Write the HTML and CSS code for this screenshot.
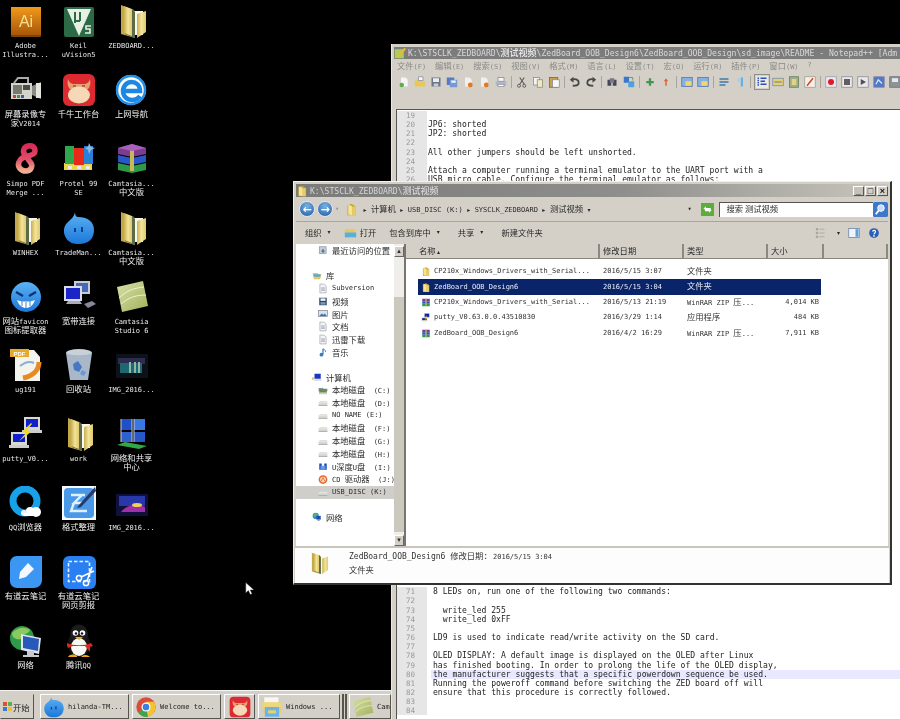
FILE: index.html
```html
<!DOCTYPE html>
<html lang="zh">
<head>
<meta charset="utf-8">
<title>Desktop</title>
<link rel="stylesheet" href="styles.css">
</head>
<body>
<svg class="defs" xmlns="http://www.w3.org/2000/svg">
  <defs>
    <linearGradient id="gOrange" x1="0" y1="0" x2="0" y2="1"><stop offset="0" stop-color="#f09a1c"/><stop offset="1" stop-color="#a8560a"/></linearGradient>
    <linearGradient id="gFolder" x1="0" y1="0" x2="1" y2="0"><stop offset="0" stop-color="#c9b04e"/><stop offset=".5" stop-color="#f2e49c"/><stop offset="1" stop-color="#e0c86c"/></linearGradient>
    <linearGradient id="gBlue" x1="0" y1="0" x2="0" y2="1"><stop offset="0" stop-color="#5cb2f4"/><stop offset="1" stop-color="#1c78d8"/></linearGradient>
    <linearGradient id="gOlive" x1="0" y1="0" x2="1" y2="1"><stop offset="0" stop-color="#d8dfa8"/><stop offset="1" stop-color="#a2b25c"/></linearGradient>
    <linearGradient id="g8" x1="0" y1="0" x2="0" y2="1"><stop offset="0" stop-color="#d82c58"/><stop offset=".55" stop-color="#e0506a"/><stop offset="1" stop-color="#f0b090"/></linearGradient>
  </defs>
  <symbol id="i-ai" viewBox="0 0 34 34"><rect x="2" y="5" width="30" height="28" rx="1" fill="#7c4408"/><rect x="2" y="3" width="30" height="28" fill="url(#gOrange)"/></symbol>
  <symbol id="i-keil" viewBox="0 0 34 34"><rect x="2" y="3" width="30" height="30" rx="2" fill="#2c6a46"/><path d="M5 5H29L17 32Z" fill="#e8f0e4"/><path d="M13 8v11M13 17h5M18 8v9" stroke="#2c6a46" stroke-width="2" fill="none"/><path d="M22 20h8v11h-8z" fill="#2c6a46"/><path d="M29 22h-5v3h4v4h-5" stroke="#e8f0e4" stroke-width="1.6" fill="none"/></symbol>
  <symbol id="i-folder" viewBox="0 0 34 34"><path d="M6 1l14 6v27L6 30Z" fill="#c4a94a"/><path d="M12 7h16v24H12z" fill="#f8f8f0"/><path d="M10 5h8l2 3v26l-10-4Z" fill="#5c6a48"/><path d="M22 10l9-3v21l-9 6Z" fill="url(#gFolder)"/><path d="M9 2l8 3v27l-8-3Z" fill="url(#gFolder)"/></symbol>
  <symbol id="i-cam" viewBox="0 0 34 34"><rect x="2" y="10" width="21" height="16" fill="#d4d4cc"/><rect x="4" y="12" width="9" height="9" fill="#75786c"/><path d="M4 22h3v3H4z" fill="#d83838"/><path d="M8 22h3v3H8z" fill="#3c9a44"/><path d="M12 22h3v3h-3z" fill="#3c58c8"/><path d="M23 13l9-4v17l-9-4Z" fill="#8a8a84"/><rect x="27" y="10" width="5" height="15" fill="#e4e4dc"/><path d="M5 10l4-5h10v5" fill="none" stroke="#aaa" stroke-width="2"/><rect x="14" y="12" width="7" height="5" fill="#4a4a48"/></symbol>
  <symbol id="i-cow" viewBox="0 0 34 34"><rect x="1" y="1" width="32" height="32" rx="6" fill="#dc2a30"/><path d="M6 6c1 3 2 4 5 5h12c3-1 4-2 5-5 1 5 0 8-2 10H8C6 14 5 11 6 6Z" fill="#e8a070"/><ellipse cx="17" cy="22" rx="11" ry="8.5" fill="#f6d8b8"/><path d="M11 13h3M20 13h3" stroke="#703018" stroke-width="1"/></symbol>
  <symbol id="i-ie" viewBox="0 0 34 34"><circle cx="16" cy="17" r="15" fill="#fff"/><circle cx="16" cy="17" r="14" fill="none" stroke="#2090e8" stroke-width="2.5"/><path d="M7 18h18c0-6-4-9-8.500-9S8 13 8 18s4 9 9 9c3 0 6-1 8-4" fill="none" stroke="#1a88e4" stroke-width="4.5"/></symbol>
  <symbol id="i-simpo" viewBox="0 0 34 34"><path d="M26 9c0-4-3-6-7-5-4 1-6 5-3 9l6 8c2 3 0 8-5 8s-9-4-7-9c1-3 4-5 9-6 4-1 7-2 7-5Z" fill="none" stroke="url(#g8)" stroke-width="5.5"/></symbol>
  <symbol id="i-protel" viewBox="0 0 34 34"><path d="M2 28h28v-7H2z" fill="#e8d848"/><path d="M3 4h9v18H3z" fill="#2da84c"/><path d="M12 6h10v17H12z" fill="#e82818"/><path d="M22 4h9v18h-9z" fill="#2880d8"/><path d="M6 24h4v3H6zM15 24h4v3h-4zM24 24h4v3h-4z" fill="#e8e8f0"/><path d="M27 1l2 4 4 1-4 2-2 4-1-4-3-2 3-1Z" fill="#8ab8e0"/></symbol>
  <symbol id="i-rar" viewBox="0 0 34 34"><path d="M3 6l14-4 14 4v6l-14 3-14-3Z" fill="#7c3c90"/><path d="M3 13l14 3 14-3v7l-14 3-14-3Z" fill="#2858c8"/><path d="M3 21l14 3 14-3v7l-14 3-14-3Z" fill="#2c9848"/><path d="M15 5h4v24h-4z" fill="#c8b858"/><path d="M3 6l14-4 14 4-14 3Z" fill="#a860b8"/></symbol>
  <symbol id="i-drop" viewBox="0 0 34 34"><path d="M13 1c-1 5-3 6-7 10C1 15 1 22 4 27c3 5 8 6 13 6 9 0 15-5 15-14S25 6 16 6c-2 0-3-2-3-5Z" fill="url(#gBlue)"/><path d="M13 17v4M20 16v5" stroke="#0c4090" stroke-width="2"/></symbol>
  <symbol id="i-face" viewBox="0 0 34 34"><circle cx="17" cy="17" r="15" fill="url(#gBlue)"/><path d="M7 12l7 4M27 12l-7 4" stroke="#0c3478" stroke-width="2.5"/><path d="M8 20c5 2 13 2 18 0-2 6-6 8-9 8s-7-2-9-8Z" fill="#fff"/><path d="M13 21v5M17 22v6M21 21v5" stroke="#4a80c8"/></symbol>
  <symbol id="i-net" viewBox="0 0 34 34"><rect x="12" y="1" width="16" height="13" fill="#c4ccd8"/><rect x="14" y="3" width="12" height="9" fill="#4868b8"/><rect x="2" y="6" width="18" height="15" fill="#d8dce4"/><rect x="4" y="8" width="14" height="11" fill="#1c24c8"/><path d="M6 21h12l2 3H4Z" fill="#aab"/><path d="M22 24l8-3 4 3-8 4Z" fill="#889"/></symbol>
  <symbol id="i-olive" viewBox="0 0 34 34"><path d="M2 7l26-6 5 25-26 6Z" fill="url(#gOlive)"/><path d="M4 18c8-8 16-10 25-11M6 24c8-7 16-9 25-9" stroke="#eef2d0" fill="none"/></symbol>
  <symbol id="i-pdf" viewBox="0 0 34 34"><path d="M6 2h19l6 7v24H6Z" fill="#f4f4ee"/><path d="M1 1h19v8H1z" fill="#e8a828"/><path d="M30 14c0 8-6 14-16 16" fill="none" stroke="#e88a20" stroke-width="5"/><path d="M11 18c5-4 10-5 14-3" fill="none" stroke="#88b0d8" stroke-width="2"/></symbol>
  <symbol id="i-bin" viewBox="0 0 34 34"><ellipse cx="17" cy="5" rx="13" ry="4" fill="#c8d0d8"/><path d="M4 5l4 27h18l4-27c-4 3-22 3-26 0Z" fill="#a8b8c8"/><path d="M11 16l5-3 4 6-3 5-5-2Z" fill="#4878c0"/><path d="M20 22l4 2-2 4-4-2Z" fill="#6898d8"/></symbol>
  <symbol id="i-imgd" viewBox="0 0 34 34"><rect x="1" y="6" width="32" height="24" fill="#0c1218"/><rect x="3" y="10" width="27" height="6" fill="#2c2c50"/><rect x="5" y="15" width="22" height="10" fill="#206870"/><path d="M14 14h2v11h-2zM19 14h2v11h-2zM23 14h2v11h-2z" fill="#90b8a8"/></symbol>
  <symbol id="i-img2" viewBox="0 0 34 34"><rect x="1" y="8" width="32" height="22" fill="#10103c"/><rect x="4" y="10" width="26" height="10" fill="#2838a8"/><path d="M6 26c5-7 16-9 24-5v5Z" fill="#a030a8"/><ellipse cx="22" cy="19" rx="5" ry="2" fill="#f0d060"/></symbol>
  <symbol id="i-putty" viewBox="0 0 34 34"><rect x="15" y="0" width="16" height="13" fill="#d8d8d0"/><rect x="17" y="2" width="12" height="8" fill="#1020c8"/><path d="M13 13h20v3H13z" fill="#ccc"/><rect x="2" y="15" width="16" height="13" fill="#d8d8d0"/><rect x="4" y="17" width="12" height="8" fill="#1020c8"/><path d="M0 28h20v3H0z" fill="#ccc"/><path d="M22 6l-9 9 4 1-7 8 12-9-4-2 5-6Z" fill="#f0d820"/></symbol>
  <symbol id="i-share" viewBox="0 0 34 34"><path d="M6 2h11v11H6z" fill="#2050c8"/><path d="M19 2h11v11H19z" fill="#3878e0"/><path d="M6 15h11v10H6z" fill="#3060d0"/><path d="M19 15h11v10H19z" fill="#2858c8"/><path d="M2 28l8-3 22 4-8 3Z" fill="#30a848"/><path d="M6 2v23M17 2v23M19 2v23" stroke="#ccd" fill="none"/></symbol>
  <symbol id="i-qqb" viewBox="0 0 34 34"><circle cx="16" cy="15" r="12" fill="none" stroke="#18a0e8" stroke-width="7"/><circle cx="21" cy="25" r="4" fill="#fff"/><circle cx="27" cy="26" r="5" fill="#fff"/><circle cx="15" cy="27" r="3" fill="#e8f0f8"/><path d="M15 27h15v3H15z" fill="#fff"/></symbol>
  <symbol id="i-fmt" viewBox="0 0 34 34"><rect x="0" y="0" width="34" height="34" fill="#f4f8ff"/><rect x="2" y="2" width="30" height="30" rx="4" fill="#4a98e8"/><path d="M9 9h14M20 9l-8 8h8M12 17l-3 8h16" fill="none" stroke="#dff0ff" stroke-width="2.4"/><path d="M33 1L17 19l-2 3 4-1L34 5Z" fill="#283868"/></symbol>
  <symbol id="i-yd" viewBox="0 0 34 34"><path d="M8 1h25v24c0 4-3 8-8 8H8c-4 0-7-3-7-7V8c0-4 3-7 7-7Z" fill="#3c96f4"/><path d="M10 24l1-7 8-9 6 6-8 8Z" fill="#f4f8ff"/></symbol>
  <symbol id="i-ydc" viewBox="0 0 34 34"><rect x="1" y="1" width="33" height="33" rx="6" fill="#2a80f0"/><rect x="6.5" y="6.5" width="21" height="20" fill="none" stroke="#e8f2ff" stroke-width="1.6" stroke-dasharray="3.5 2"/><circle cx="17" cy="23" r="2.6" fill="none" stroke="#fff" stroke-width="1.5"/><circle cx="24" cy="28" r="2.6" fill="none" stroke="#fff" stroke-width="1.5"/><path d="M19 22L32 16M25 26L30 12" stroke="#fff" stroke-width="1.6"/></symbol>
  <symbol id="i-netg" viewBox="0 0 34 34"><circle cx="13" cy="14" r="12" fill="#2f9a4c"/><path d="M3 9c5-5 12-7 18-3-2 5-8 3-9 9-5 1-9-1-9-6Z" fill="#8ac860"/><path d="M12 10l20 4-2 16-18-4Z" fill="#dfe4f0"/><path d="M14 12l16 3-1 12-15-3Z" fill="#2858b8"/><path d="M18 27h7v4h5v2H14v-2h4Z" fill="#c8c8d0"/></symbol>
  <symbol id="i-qq" viewBox="0 0 34 34"><ellipse cx="17" cy="20" rx="11" ry="13" fill="#141414"/><ellipse cx="17" cy="10" rx="9" ry="9.5" fill="#1c1c1c"/><ellipse cx="17" cy="23" rx="8" ry="9" fill="#f8f8f4"/><circle cx="13.5" cy="9" r="2.8" fill="#fff"/><circle cx="20.5" cy="9" r="2.8" fill="#fff"/><circle cx="14" cy="9.5" r="1.2" fill="#111"/><circle cx="20" cy="9.5" r="1.2" fill="#111"/><path d="M13 13h8l-4 3Z" fill="#f0b020"/><path d="M5 19c6 3 18 3 24 0l2 3-3 1v5l-5-6H11l-5 2-1-2Z" fill="#d82820"/><path d="M6 33c2-3 6-3 9-1v1ZM19 33c3-3 7-2 9 0Z" fill="#f0a818"/></symbol>
  <symbol id="i-chrome" viewBox="0 0 34 34"><circle cx="17" cy="17" r="15" fill="#dd4b3c"/><path d="M17 17L5 25a15 15 0 0 0 15 7Z" fill="#3aa64a"/><path d="M17 17l3 15a15 15 0 0 0 9-23H17Z" fill="#f4c430"/><circle cx="17" cy="17" r="7" fill="#fff"/><circle cx="17" cy="17" r="5.2" fill="#3a80e0"/></symbol>
  <symbol id="i-tfolder" viewBox="0 0 34 34"><path d="M3 4h14l3 4h11v20H3Z" fill="#e8d070"/><path d="M5 2h22v8H5z" fill="#f8f8f0"/><path d="M2 10h30v7H2z" fill="#ecd87a"/><path d="M6 17h22v15H6z" fill="#6ab4e8"/><path d="M11 22h12v5H11z" fill="#e8d070"/></symbol>
  <symbol id="i-sfolder" viewBox="0 0 16 16"><path d="M3 3l5-2 5 3v11H3Z" fill="#c8a838"/><path d="M4 2l5 2v11l-5-1Z" fill="#f4e498"/><path d="M9 5l4-1v11l-4 0Z" fill="#e8cc68"/></symbol>
  <symbol id="i-szip" viewBox="0 0 16 16"><path d="M2 2h12v4H2z" fill="#7c3c90"/><path d="M2 6h12v4H2z" fill="#2858c8"/><path d="M2 10h12v4H2z" fill="#2c9848"/><path d="M7 2h2v12H7z" fill="#c8b858"/></symbol>
  <symbol id="i-sputty" viewBox="0 0 16 16"><rect x="5" y="1" width="9" height="8" fill="#ccc"/><rect x="6" y="2" width="7" height="5" fill="#1020a8"/><rect x="1" y="8" width="9" height="6" fill="#ccc"/><rect x="2" y="9" width="7" height="3" fill="#1020a8"/><path d="M10 4l-5 5h3l-3 4 6-5H8Z" fill="#f0d820"/></symbol>
  <symbol id="i-drive" viewBox="0 0 16 16"><path d="M1 8l2-2h11l1 2v5H1Z" fill="#d4d4d0"/><path d="M1 8h14v1H1z" fill="#f4f4f0"/><path d="M1 12h14v1H1z" fill="#999"/></symbol>
  <symbol id="i-cdrive" viewBox="0 0 16 16"><path d="M1 4h4l2 1h8v4H1Z" fill="#888"/><rect x="2" y="6" width="12" height="7" fill="#6a8a50"/><path d="M2 11h12v3H2z" fill="#ccc"/><path d="M6 3l3 2-2 2Z" fill="#4a8ac8"/></symbol>
  <symbol id="i-usb" viewBox="0 0 16 16"><path d="M2 3h4v4h4V3h4v10H2Z" fill="#2050b8"/><rect x="4" y="7" width="8" height="6" fill="#6898e0"/></symbol>
  <symbol id="i-cd" viewBox="0 0 16 16"><circle cx="8" cy="8" r="7" fill="#e8682c"/><circle cx="8" cy="8" r="4.5" fill="#f8e0c8"/><path d="M5 11l3-6 3 6" fill="none" stroke="#e8682c" stroke-width="1.4"/></symbol>
  <symbol id="i-lib" viewBox="0 0 16 16"><path d="M1 4h8l2 2h4l-2 8H3Z" fill="#e8c858"/><path d="M2 6h12l-1 4H3Z" fill="#58a8d8"/></symbol>
  <symbol id="i-pc" viewBox="0 0 16 16"><rect x="4" y="2" width="10" height="8" fill="#1838c0"/><path d="M3 11h12v2H3z" fill="#ccd"/><path d="M0 8l3-1v4l-3 1Z" fill="#e8c858"/></symbol>
  <symbol id="i-globe" viewBox="0 0 16 16"><circle cx="6" cy="7" r="5" fill="#3890c8"/><path d="M2 5c3-2 5-2 7-1l-2 3-3 1Z" fill="#5cb85c"/><rect x="7" y="7" width="7" height="6" fill="#1c50b0"/><path d="M9 13h3v2H9z" fill="#888"/></symbol>
  <symbol id="i-doc" viewBox="0 0 16 16"><path d="M3 1h7l3 3v11H3Z" fill="#f4f4f4" stroke="#99a"/><path d="M5 7h6M5 9h6M5 11h6" stroke="#8090a8"/></symbol>
  <symbol id="i-video" viewBox="0 0 16 16"><rect x="2" y="2" width="12" height="12" fill="#2c4868"/><rect x="4" y="3" width="8" height="4" fill="#f0f4f8"/><rect x="4" y="9" width="8" height="4" fill="#8098b0"/></symbol>
  <symbol id="i-pic" viewBox="0 0 16 16"><rect x="1" y="3" width="14" height="10" fill="#d4e4f0" stroke="#778"/><path d="M2 12l4-4 3 2 2-2 3 4Z" fill="#3878a8"/></symbol>
  <symbol id="i-music" viewBox="0 0 16 16"><path d="M8 2v9" stroke="#3878c8" stroke-width="2"/><circle cx="5.5" cy="11.5" r="3" fill="#3878c8"/><path d="M8 2c2 1 4 2 4 5" fill="none" stroke="#3878c8" stroke-width="1.5"/></symbol>
  <symbol id="i-recent" viewBox="0 0 16 16"><rect x="2" y="2" width="11" height="11" fill="#c4ccd4" stroke="#889"/><path d="M5 9l3-4 3 4-3 3Z" fill="#5878a0"/></symbol>
  <symbol id="i-open" viewBox="0 0 16 16"><path d="M1 4h13v4H1z" fill="#e8c858"/><path d="M1 8h14v6H1z" fill="#58b0d8"/></symbol>
  <symbol id="i-go" viewBox="0 0 16 16"><rect width="16" height="16" fill="#5cae3c"/><path d="M3 7l3-3v2h6v2H6v1ZM13 9l-3 3v-2H5V8h5V7Z" fill="#fff"/></symbol>
  <symbol id="i-search" viewBox="0 0 16 16"><rect width="16" height="16" rx="2" fill="#3e78c8"/><circle cx="8.5" cy="6.5" r="3.5" fill="#c4dcf4" stroke="#fff"/><path d="M6 9l-3 4" stroke="#fff" stroke-width="2"/></symbol>
  <symbol id="i-help" viewBox="0 0 16 16"><circle cx="8" cy="8" r="6.5" fill="#2860b8"/><path d="M6 6c1-2 4-2 4 0s-2 2-2 4" fill="none" stroke="#fff" stroke-width="1.5"/><path d="M7 11h2v2H7z" fill="#fff"/></symbol>
  <symbol id="i-views" viewBox="0 0 16 16"><path d="M3 2h2v2H3zM3 7h2v2H3zM3 12h2v2H3zM7 3h7M7 8h7M7 13h7" fill="#a0a098" stroke="#a0a098"/></symbol>
  <symbol id="i-panel" viewBox="0 0 16 16"><rect x="1" y="2" width="14" height="12" fill="#f0f4f8" stroke="#6080a8"/><rect x="10" y="3" width="4" height="10" fill="#58a0d8"/></symbol>
  <symbol id="t-new" viewBox="0 0 16 16"><path d="M4 2h6l3 3v9H4Z" fill="#f4f4f4"/><circle cx="5" cy="12" r="3" fill="#58b048"/></symbol>
  <symbol id="t-open" viewBox="0 0 16 16"><path d="M1 5h6l2 2h6v7H1Z" fill="#e8c858"/><path d="M6 1h6v5H6z" fill="#f8f8f8" stroke="#88a"/></symbol>
  <symbol id="t-save" viewBox="0 0 16 16"><rect x="2" y="2" width="12" height="12" fill="#6c7888"/><rect x="4" y="3" width="8" height="5" fill="#e8ecf0"/><rect x="5" y="10" width="6" height="4" fill="#c4ccd4"/></symbol>
  <symbol id="t-saveall" viewBox="0 0 16 16"><rect x="1" y="2" width="10" height="10" fill="#5878c0"/><rect x="5" y="5" width="10" height="10" fill="#7898d8"/><rect x="7" y="6" width="6" height="3" fill="#f0f4f8"/></symbol>
  <symbol id="t-close" viewBox="0 0 16 16"><path d="M4 2h6l3 3v9H4Z" fill="#f0f0f0"/><circle cx="11" cy="12" r="3.2" fill="#e87820"/></symbol>
  <symbol id="t-print" viewBox="0 0 16 16"><rect x="1" y="7" width="14" height="6" fill="#b4b8c4"/><rect x="4" y="2" width="8" height="5" fill="#f4f4f4" stroke="#889"/><rect x="4" y="11" width="8" height="3" fill="#fff" stroke="#889"/></symbol>
  <symbol id="t-cut" viewBox="0 0 16 16"><path d="M5 2l6 9M11 2L5 11" stroke="#606060" stroke-width="1.6"/><circle cx="4" cy="13" r="2" fill="none" stroke="#444"/><circle cx="11" cy="13" r="2" fill="none" stroke="#444"/></symbol>
  <symbol id="t-copy" viewBox="0 0 16 16"><rect x="2" y="2" width="8" height="10" fill="#f4f4f0" stroke="#888"/><rect x="7" y="5" width="7" height="10" fill="#f0e8c0" stroke="#887"/></symbol>
  <symbol id="t-paste" viewBox="0 0 16 16"><rect x="2" y="2" width="11" height="13" fill="#c8a050" stroke="#806020"/><rect x="6" y="5" width="9" height="10" fill="#f8f8f8" stroke="#888"/></symbol>
  <symbol id="t-undo" viewBox="0 0 16 16"><path d="M4 5c5-2 9 0 9 4s-4 4-8 4" fill="none" stroke="#484848" stroke-width="2.4"/><path d="M6 1v8L1 5Z" fill="#484848"/></symbol>
  <symbol id="t-redo" viewBox="0 0 16 16"><path d="M12 5C7 3 3 5 3 9s4 4 8 4" fill="none" stroke="#484848" stroke-width="2.4"/><path d="M10 1v8l5-4Z" fill="#484848"/></symbol>
  <symbol id="t-find" viewBox="0 0 16 16"><rect x="2" y="5" width="5" height="8" fill="#445"/><rect x="9" y="5" width="5" height="8" fill="#445"/><path d="M5 3h6v6H5z" fill="#778"/></symbol>
  <symbol id="t-rep" viewBox="0 0 16 16"><rect x="1" y="1" width="7" height="8" fill="#3878c8"/><rect x="7" y="7" width="8" height="8" fill="#50a0e0"/><path d="M8 2h5v4" fill="none" stroke="#4a9048"/></symbol>
  <symbol id="t-zin" viewBox="0 0 16 16"><path d="M8 3v10M3 8h10" stroke="#3c9850" stroke-width="3"/></symbol>
  <symbol id="t-zout" viewBox="0 0 16 16"><path d="M8 3l3 4H9v6H7V7H5Z" fill="#d86830"/></symbol>
  <symbol id="t-pane" viewBox="0 0 16 16"><rect x="1" y="2" width="14" height="12" fill="#88b0e0" stroke="#5070a8"/><rect x="6" y="7" width="8" height="6" fill="#f0d870"/></symbol>
  <symbol id="t-wrap" viewBox="0 0 16 16"><path d="M2 4h12M2 8h12M2 12h8" stroke="#4078a8" stroke-width="2"/></symbol>
  <symbol id="t-para" viewBox="0 0 16 16"><path d="M9 2v12h3V2Z" fill="#68b0e0"/><path d="M9 2H7a3 3 0 0 0 0 6h2Z" fill="#a8d0f0"/></symbol>
  <symbol id="t-ind" viewBox="0 0 16 16"><path d="M3 2v12" stroke="#2850b8" stroke-width="2" stroke-dasharray="2 1"/><path d="M6 3h8M6 7h6M6 11h8" stroke="#2850b8" stroke-width="2"/></symbol>
  <symbol id="t-box" viewBox="0 0 16 16"><rect x="1" y="3" width="14" height="10" fill="#e8d070" stroke="#6888b8"/><path d="M3 8h10" stroke="#3060b0"/></symbol>
  <symbol id="t-ps" viewBox="0 0 16 16"><rect x="2" y="1" width="12" height="14" fill="#9ab090" stroke="#607850"/><rect x="5" y="4" width="6" height="8" fill="#e8d080"/></symbol>
  <symbol id="t-pen" viewBox="0 0 16 16"><rect x="1" y="1" width="14" height="14" fill="#f4f0e8" stroke="#998"/><path d="M4 13l8-10" stroke="#d84030" stroke-width="2"/></symbol>
  <symbol id="t-logo" viewBox="0 0 16 16"><rect x="1" y="3" width="12" height="12" fill="#a8d058"/><path d="M4 12L14 1l2 2L6 14H4Z" fill="#e8b838"/></symbol>
  <symbol id="t-rec" viewBox="0 0 16 16"><rect x="1" y="1" width="14" height="14" fill="#e8e8f0" stroke="#99a"/><circle cx="8" cy="8" r="4" fill="#e01828"/></symbol>
  <symbol id="t-stop" viewBox="0 0 16 16"><rect x="1" y="1" width="14" height="14" fill="#e8e8e8" stroke="#889"/><rect x="4" y="4" width="8" height="8" fill="#606060"/></symbol>
  <symbol id="t-play" viewBox="0 0 16 16"><rect x="1" y="1" width="14" height="14" fill="#e8e8e8" stroke="#889"/><path d="M5 4l7 4-7 4Z" fill="#505050"/></symbol>
  <symbol id="t-multi" viewBox="0 0 16 16"><rect x="1" y="1" width="14" height="14" fill="#5078c8" stroke="#889"/><path d="M4 11l3-6 5 5" fill="none" stroke="#e0e8f8" stroke-width="1.6"/></symbol>
  <symbol id="t-diskm" viewBox="0 0 16 16"><rect x="1" y="1" width="14" height="14" fill="#8c9498" stroke="#667"/><rect x="4" y="3" width="8" height="5" fill="#e8e8e8"/></symbol>
</svg>

<main class="screen">
  <section class="desk">
    <div class="ic"><svg class="big" viewBox="0 0 34 34"><use href="#i-ai"/><text x="17" y="23" text-anchor="middle" class="svg-ai">Ai</text></svg><p class="lab">Adobe<br>Illustra...</p></div>
    <div class="ic"><svg class="big"><use href="#i-keil"/></svg><p class="lab">Keil<br>uVision5</p></div>
    <div class="ic"><svg class="big"><use href="#i-folder"/></svg><p class="lab">ZEDBOARD...</p></div>

    <div class="ic"><svg class="big"><use href="#i-cam"/></svg><p class="lab"><span class="zh">屏幕录像专</span><br><span class="zh">家</span>V2014</p></div>
    <div class="ic"><svg class="big"><use href="#i-cow"/></svg><p class="lab"><span class="zh">千牛工作台</span></p></div>
    <div class="ic"><svg class="big"><use href="#i-ie"/></svg><p class="lab"><span class="zh">上网导航</span></p></div>

    <div class="ic"><svg class="big"><use href="#i-simpo"/></svg><p class="lab">Simpo PDF<br>Merge ...</p></div>
    <div class="ic"><svg class="big"><use href="#i-protel"/></svg><p class="lab">Protel 99<br>SE</p></div>
    <div class="ic"><svg class="big"><use href="#i-rar"/></svg><p class="lab">Camtasia...<br><span class="zh">中文版</span></p></div>

    <div class="ic"><svg class="big"><use href="#i-folder"/></svg><p class="lab">WINHEX</p></div>
    <div class="ic"><svg class="big"><use href="#i-drop"/></svg><p class="lab">TradeMan...</p></div>
    <div class="ic"><svg class="big"><use href="#i-folder"/></svg><p class="lab">Camtasia...<br><span class="zh">中文版</span></p></div>

    <div class="ic"><svg class="big"><use href="#i-face"/></svg><p class="lab"><span class="zh">网站</span>favicon<br><span class="zh">图标提取器</span></p></div>
    <div class="ic"><svg class="big"><use href="#i-net"/></svg><p class="lab"><span class="zh">宽带连接</span></p></div>
    <div class="ic"><svg class="big"><use href="#i-olive"/></svg><p class="lab">Camtasia<br>Studio 6</p></div>

    <div class="ic"><svg class="big" viewBox="0 0 34 34"><use href="#i-pdf"/><text x="10.5" y="8" text-anchor="middle" class="svg-pdf">PDF</text></svg><p class="lab">ug191</p></div>
    <div class="ic"><svg class="big"><use href="#i-bin"/></svg><p class="lab"><span class="zh">回收站</span></p></div>
    <div class="ic"><svg class="big"><use href="#i-imgd"/></svg><p class="lab">IMG_2016...</p></div>

    <div class="ic"><svg class="big"><use href="#i-putty"/></svg><p class="lab">putty_V0...</p></div>
    <div class="ic"><svg class="big"><use href="#i-folder"/></svg><p class="lab">work</p></div>
    <div class="ic"><svg class="big"><use href="#i-share"/></svg><p class="lab"><span class="zh">网络和共享</span><br><span class="zh">中心</span></p></div>

    <div class="ic"><svg class="big"><use href="#i-qqb"/></svg><p class="lab">QQ<span class="zh">浏览器</span></p></div>
    <div class="ic"><svg class="big"><use href="#i-fmt"/></svg><p class="lab"><span class="zh">格式整理</span></p></div>
    <div class="ic"><svg class="big"><use href="#i-img2"/></svg><p class="lab">IMG_2016...</p></div>

    <div class="ic"><svg class="big"><use href="#i-yd"/></svg><p class="lab"><span class="zh">有道云笔记</span></p></div>
    <div class="ic"><svg class="big"><use href="#i-ydc"/></svg><p class="lab"><span class="zh">有道云笔记</span><br><span class="zh">网页剪报</span></p></div>
    <div class="ic"></div>

    <div class="ic"><svg class="big"><use href="#i-netg"/></svg><p class="lab"><span class="zh">网络</span></p></div>
    <div class="ic"><svg class="big"><use href="#i-qq"/></svg><p class="lab"><span class="zh">腾讯</span>QQ</p></div>
  </section>

  <section class="npp">
    <header class="np-title"><svg class="np-logo"><use href="#t-logo"/></svg><span class="np-path">K:\STSCLK_ZEDBOARD\<span class="zh">测试视频</span>\ZedBoard_OOB_Design6\ZedBoard_OOB_Design\sd_image\README - Notepad++ [Adm</span></header>
    <nav class="np-menu">
      <span><span class="zh">文件</span>(F)</span><span><span class="zh">编辑</span>(E)</span><span><span class="zh">搜索</span>(S)</span><span><span class="zh">视图</span>(V)</span><span><span class="zh">格式</span>(M)</span><span><span class="zh">语言</span>(L)</span><span><span class="zh">设置</span>(T)</span><span><span class="zh">宏</span>(O)</span><span><span class="zh">运行</span>(R)</span><span><span class="zh">插件</span>(P)</span><span><span class="zh">窗口</span>(W)</span><span>?</span>
    </nav>
    <div class="np-tools">
      <svg class="tb"><use href="#t-new"/></svg><svg class="tb"><use href="#t-open"/></svg><svg class="tb"><use href="#t-save"/></svg><svg class="tb"><use href="#t-saveall"/></svg><svg class="tb"><use href="#t-close"/></svg><svg class="tb"><use href="#t-close"/></svg><svg class="tb"><use href="#t-print"/></svg><i class="sep"></i>
      <svg class="tb"><use href="#t-cut"/></svg><svg class="tb"><use href="#t-copy"/></svg><svg class="tb"><use href="#t-paste"/></svg><i class="sep"></i>
      <svg class="tb"><use href="#t-undo"/></svg><svg class="tb"><use href="#t-redo"/></svg><i class="sep"></i>
      <svg class="tb"><use href="#t-find"/></svg><svg class="tb"><use href="#t-rep"/></svg><i class="sep"></i>
      <svg class="tb"><use href="#t-zin"/></svg><svg class="tb"><use href="#t-zout"/></svg><i class="sep"></i>
      <svg class="tb"><use href="#t-pane"/></svg><svg class="tb"><use href="#t-pane"/></svg><i class="sep"></i>
      <svg class="tb"><use href="#t-wrap"/></svg><svg class="tb"><use href="#t-para"/></svg><i class="sep"></i>
      <svg class="tb on"><use href="#t-ind"/></svg><svg class="tb"><use href="#t-box"/></svg><svg class="tb"><use href="#t-ps"/></svg><svg class="tb"><use href="#t-pen"/></svg><i class="sep"></i>
      <svg class="tb"><use href="#t-rec"/></svg><svg class="tb"><use href="#t-stop"/></svg><svg class="tb"><use href="#t-play"/></svg><svg class="tb"><use href="#t-multi"/></svg><svg class="tb"><use href="#t-diskm"/></svg>
    </div>
    <div class="editor">
      <div class="ln"><b>19</b><code></code></div>
      <div class="ln"><b>20</b><code>JP6: shorted</code></div>
      <div class="ln"><b>21</b><code>JP2: shorted</code></div>
      <div class="ln"><b>22</b><code></code></div>
      <div class="ln"><b>23</b><code>All other jumpers should be left unshorted.</code></div>
      <div class="ln"><b>24</b><code></code></div>
      <div class="ln"><b>25</b><code>Attach a computer running a terminal emulator to the UART port with a</code></div>
      <div class="ln"><b>26</b><code>USB micro cable. Configure the terminal emulator as follows:</code></div>
      <div class="ln-hidden"></div>
      <div class="lower">
        <div class="ln"><b>71</b><code>8 LEDs on, run one of the following two commands:</code></div>
        <div class="ln"><b>72</b><code></code></div>
        <div class="ln"><b>73</b><code>  write_led 255</code></div>
        <div class="ln"><b>74</b><code>  write_led 0xFF</code></div>
        <div class="ln"><b>75</b><code></code></div>
        <div class="ln"><b>76</b><code>LD9 is used to indicate read/write activity on the SD card.</code></div>
        <div class="ln"><b>77</b><code></code></div>
        <div class="ln"><b>78</b><code>OLED DISPLAY: A default image is displayed on the OLED after Linux</code></div>
        <div class="ln"><b>79</b><code>has finished booting. In order to prolong the life of the OLED display,</code></div>
        <div class="ln cur"><b>80</b><code>the manufacturer suggests that a specific powerdown sequence be used.</code></div>
        <div class="ln"><b>81</b><code>Running the poweroff command before switching the ZED board off will</code></div>
        <div class="ln"><b>82</b><code>ensure that this procedure is correctly followed.</code></div>
        <div class="ln"><b>83</b><code></code></div>
        <div class="ln"><b>84</b><code></code></div>
      </div>
    </div>
  </section>

  <section class="exp">
    <header class="ex-title">
      <svg class="s12"><use href="#i-sfolder"/></svg><span class="ex-path">K:\STSCLK_ZEDBOARD\<span class="zh">测试视频</span></span>
      <span class="caps"><i class="cap dim">_</i><i class="cap">&#9633;</i><i class="cap">&#215;</i></span>
    </header>
    <div class="ex-addr">
      <span class="round"><span class="arrow">&#8592;</span></span><span class="round"><span class="arrow">&#8594;</span></span><span class="drop">&#9662;</span>
      <svg class="s14"><use href="#i-sfolder"/></svg>
      <span class="crumbs"><span class="sp">&#9656;</span><span class="zh">计算机</span><span class="sp">&#9656;</span>USB_DISC (K:)<span class="sp">&#9656;</span>SYSCLK_ZEDBOARD<span class="sp">&#9656;</span><span class="zh">测试视频</span><span class="sp">&#9662;</span></span>
      <span class="addr-drop">&#9662;</span>
      <svg class="s14"><use href="#i-go"/></svg>
      <span class="searchbox"><span class="zh">搜索 测试视频</span></span>
      <svg class="s16"><use href="#i-search"/></svg>
    </div>
    <div class="ex-tools">
      <span class="zh tool first">组织<small>&#9662;</small></span>
      <span class="zh tool open"><svg class="s14"><use href="#i-open"/></svg>打开</span>
      <span class="zh tool">包含到库中<small>&#9662;</small></span>
      <span class="zh tool">共享<small>&#9662;</small></span>
      <span class="zh tool">新建文件夹</span>
      <span class="tools-right"><svg class="s12"><use href="#i-views"/></svg><small>&#9662;</small><svg class="s12"><use href="#i-panel"/></svg><svg class="s12"><use href="#i-help"/></svg></span>
    </div>
    <div class="ex-body">
      <aside class="nav">
        <ul class="tree">
          <li class="n2 top"><svg class="s10"><use href="#i-recent"/></svg><span class="zh">最近访问的位置</span></li>
          <li class="n1 gap"><svg class="s10"><use href="#i-lib"/></svg><span class="zh">库</span></li>
          <li class="n2"><svg class="s10"><use href="#i-doc"/></svg><span>Subversion</span></li>
          <li class="n2"><svg class="s10"><use href="#i-video"/></svg><span class="zh">视频</span></li>
          <li class="n2"><svg class="s10"><use href="#i-pic"/></svg><span class="zh">图片</span></li>
          <li class="n2"><svg class="s10"><use href="#i-doc"/></svg><span class="zh">文档</span></li>
          <li class="n2"><svg class="s10"><use href="#i-doc"/></svg><span class="zh">迅雷下载</span></li>
          <li class="n2"><svg class="s10"><use href="#i-music"/></svg><span class="zh">音乐</span></li>
          <li class="n1 gap"><svg class="s10"><use href="#i-pc"/></svg><span class="zh">计算机</span></li>
          <li class="n2"><svg class="s10"><use href="#i-cdrive"/></svg><span><span class="zh">本地磁盘</span>&nbsp;&nbsp;(C:)</span></li>
          <li class="n2"><svg class="s10"><use href="#i-drive"/></svg><span><span class="zh">本地磁盘</span>&nbsp;&nbsp;(D:)</span></li>
          <li class="n2"><svg class="s10"><use href="#i-drive"/></svg><span>NO NAME (E:)</span></li>
          <li class="n2"><svg class="s10"><use href="#i-drive"/></svg><span><span class="zh">本地磁盘</span>&nbsp;&nbsp;(F:)</span></li>
          <li class="n2"><svg class="s10"><use href="#i-drive"/></svg><span><span class="zh">本地磁盘</span>&nbsp;&nbsp;(G:)</span></li>
          <li class="n2"><svg class="s10"><use href="#i-drive"/></svg><span><span class="zh">本地磁盘</span>&nbsp;&nbsp;(H:)</span></li>
          <li class="n2"><svg class="s10"><use href="#i-usb"/></svg><span>U<span class="zh">深度</span>U<span class="zh">盘</span>&nbsp;&nbsp;(I:)</span></li>
          <li class="n2"><svg class="s10"><use href="#i-cd"/></svg><span>CD <span class="zh">驱动器</span>&nbsp;&nbsp;(J:)</span></li>
          <li class="n2 sel"><svg class="s10"><use href="#i-drive"/></svg><span>USB_DISC (K:)</span></li>
          <li class="n1 gap2"><svg class="s10"><use href="#i-globe"/></svg><span class="zh">网络</span></li>
        </ul>
        <div class="vbar"><span class="up">&#9652;</span><span class="thumb"></span><span class="down">&#9662;</span></div>
      </aside>
      <div class="list">
        <div class="head"><span class="zh c1">名称 <small>&#9652;</small></span><span class="zh c2">修改日期</span><span class="zh c3">类型</span><span class="zh c4">大小</span><span class="c5"></span></div>
        <div class="rows">
          <div class="row"><span class="name"><svg class="s10"><use href="#i-sfolder"/></svg><span>CP210x_Windows_Drivers_with_Serial...</span></span><span>2016/5/15 3:07</span><span class="zh">文件夹</span><span class="size"></span></div>
          <div class="row sel"><span class="name"><svg class="s10"><use href="#i-sfolder"/></svg><span>ZedBoard_OOB_Design6</span></span><span>2016/5/15 3:04</span><span class="zh">文件夹</span><span class="size"></span></div>
          <div class="row"><span class="name"><svg class="s10"><use href="#i-szip"/></svg><span>CP210x_Windows_Drivers_with_Serial...</span></span><span>2016/5/13 21:19</span><span>WinRAR ZIP <span class="zh">压</span>...</span><span class="size">4,014 KB</span></div>
          <div class="row"><span class="name"><svg class="s10"><use href="#i-sputty"/></svg><span>putty_V0.63.0.0.43510830</span></span><span>2016/3/29 1:14</span><span class="zh">应用程序</span><span class="size">484 KB</span></div>
          <div class="row"><span class="name"><svg class="s10"><use href="#i-szip"/></svg><span>ZedBoard_OOB_Design6</span></span><span>2016/4/2 16:29</span><span>WinRAR ZIP <span class="zh">压</span>...</span><span class="size">7,911 KB</span></div>
        </div>
      </div>
    </div>
    <footer class="details">
      <svg class="dfolder"><use href="#i-folder"/></svg>
      <div class="dtext">
        <p class="dname">ZedBoard_OOB_Design6 <span class="zh">修改日期</span>: <span class="ddate">2016/5/15 3:04</span></p>
        <p class="zh">文件夹</p>
      </div>
    </footer>
  </section>

  <footer class="task">
    <button class="start"><span class="flag"><i></i><i></i><i></i><i></i></span><span class="zh">开始</span></button>
    <button class="tbtn w90"><svg class="tk"><use href="#i-drop"/></svg><span>hilanda-TM...</span></button>
    <button class="tbtn w90"><svg class="tk"><use href="#i-chrome"/></svg><span>Welcome to...</span></button>
    <button class="tbtn w30"><svg class="tk"><use href="#i-cow"/></svg></button>
    <button class="tbtn w84"><svg class="tk"><use href="#i-tfolder"/></svg><span>Windows ...</span></button>
    <i class="tgrip"></i>
    <button class="tbtn grow"><svg class="tk"><use href="#i-olive"/></svg><span>Cam</span></button>
  </footer>

  <svg class="cursor" viewBox="0 0 12 18"><path d="M1 1v14l3.5-3.2L7 17l2.5-1L7 11h5Z" fill="#fff" stroke="#222" stroke-width=".6"/></svg>
</main>
</body>
</html>
```

FILE: styles.css
```css
* { box-sizing: border-box; }
html, body { margin: 0; padding: 0; background: #000; }
p, ul { margin: 0; padding: 0; }
li { list-style: none; }
.defs { position: absolute; width: 0; height: 0; }
.svg-ai { font: 16px "Liberation Sans", sans-serif; fill: #f6e090; }
.svg-pdf { font: bold 6px "Liberation Sans", sans-serif; fill: #fff; }

.screen {
  position: relative;
  width: 900px;
  height: 720px;
  overflow: hidden;
  background: #000;
  font: 7px/1 "DejaVu Sans Mono", "Noto Sans CJK SC", monospace;
  filter: blur(.35px);
}
.zh { font-family: "Noto Sans CJK SC", sans-serif; font-size: 8.3px; }

/* desktop icons */
.desk {
  display: grid;
  grid-template-columns: repeat(3, 53px);
  grid-auto-rows: 68.9px;
  margin-left: -1px;
  padding-top: 4px;
  width: 170px;
}
.ic { display: flex; flex-direction: column; align-items: center; color: #e8e8e8; }
.big { width: 34px; height: 34px; flex: none; }
.lab { margin-top: 4px; text-align: center; line-height: 9px; white-space: nowrap; font-size: 7px; }
.lab .zh { color: #f0f0f0; line-height: 0; }

/* notepad++ */
.npp {
  position: absolute;
  left: 391px;
  top: 44px;
  width: 512px;
  height: 676px;
  background: #d4d0c8;
  border-left: 1px solid #e8e8e4;
  padding: 3px 0 0 2px;
}
.np-title {
  height: 12px;
  display: flex;
  align-items: center;
  gap: 2px;
  background: #7c7c7c;
  color: #d8d8d8;
  overflow: hidden;
  white-space: nowrap;
}
.np-logo { width: 12px; height: 12px; flex: none; }
.np-path { font-size: 8.1px; }
.np-path .zh { font-size: 9px; color: #fff; }
.np-menu {
  display: flex;
  gap: 8.8px;
  height: 13px;
  padding-left: 3px;
  align-items: center;
  color: #8a8a86;
  font-size: 7px;
}
.np-tools {
  display: flex;
  align-items: center;
  height: 15px;
  margin-top: 2px;
  padding-left: 4px;
  gap: 4.1px;
}
.tb { width: 12px; height: 12px; flex: none; }
.tb.on { outline: 1px solid #8f8f88; outline-offset: 1px; background: #ebe9e4; }
.sep { width: 1px; height: 12px; background: #a8a59c; flex: none; }
.editor {
  margin: 20px 0 0 2px;
  height: 610px;
  background: #fff;
  border-top: 1px solid #55544e;
  border-left: 1px solid #55544e;
  padding-top: 1px;
  font-size: 8.07px;
}
.ln { display: flex; height: 9.16px; line-height: 9.16px; }
.ln b {
  width: 30px;
  flex: none;
  background: #e6e6e6;
  color: #9a9a9a;
  font-weight: normal;
  font-size: 7.5px;
  padding-left: 9px;
}
.ln code { font: inherit; color: #1c1c1c; white-space: pre; padding-left: 1px; flex: 1; }
.ln-hidden { height: 403px; }
.lower code { padding-left: 6px; }
.cur code { background: #e8e8ff; margin-left: 4px; padding-left: 2px; }

/* explorer */
.exp {
  position: absolute;
  left: 293px;
  top: 181px;
  width: 599px;
  height: 404px;
  background: #d4d0c8;
  border: 1px solid #f0f0ec;
  border-right: 2px solid #33332f;
  border-bottom: 2px solid #33332f;
  padding: 2px 2px 0;
  display: flex;
  flex-direction: column;
  color: #2a2a2a;
}
.ex-title {
  flex: none;
  height: 13px;
  display: flex;
  align-items: center;
  gap: 2px;
  background: linear-gradient(90deg, #7a7a78, #8e8e8c 55%, #c8c6bc);
  color: #d4d4d4;
}
.s10 { width: 10px; height: 11px; flex: none; }
.s12 { width: 12px; height: 12px; flex: none; }
.s14 { width: 13px; height: 13px; flex: none; }
.s16 { width: 15px; height: 15px; flex: none; }
.ex-path { font-size: 8.1px; }
.ex-path .zh { font-size: 9px; color: #e4e4e4; }
.caps { margin-left: auto; display: flex; gap: 1px; }
.cap {
  width: 11px;
  height: 10px;
  background: #d4d0c8;
  color: #111;
  font: bold 9px/9px "Liberation Sans", sans-serif;
  text-align: center;
  border: 1px solid #fff;
  border-right-color: #555;
  border-bottom-color: #555;
}
.cap.dim { background: #c4c2b8; }
.ex-addr {
  flex: none;
  height: 25px;
  display: flex;
  align-items: center;
  padding-left: 3px;
  border-bottom: 1px solid #a8a59c;
}
.round {
  width: 16px;
  height: 16px;
  border-radius: 50%;
  margin-right: 2px;
  background: radial-gradient(circle at 50% 30%, #7ab4e4, #1e5aa0);
  border: 1px solid #dfe6ee;
  display: flex;
  align-items: center;
  justify-content: center;
  flex: none;
}
.arrow { color: #fff; font: bold 11px/11px "DejaVu Sans", sans-serif; }
.drop { width: 10px; font-size: 7px; color: #9a9a92; }
.crumbs { width: 332px; margin-left: 1px; white-space: nowrap; color: #2a2a2a; }
.sp { margin: 0 4.5px; font-size: 6px; font-family: "DejaVu Sans", sans-serif; }
.addr-drop { font-size: 7px; width: 13px; flex: none; }
.searchbox {
  width: 156px;
  height: 15px;
  margin-left: 5px;
  background: #fff;
  border-top: 1px solid #55544e;
  border-left: 1px solid #55544e;
  padding: 1px 0 0 7px;
}
.ex-tools {
  flex: none;
  height: 22px;
  display: flex;
  align-items: center;
  font-size: 8.3px;
}
.tool { display: flex; align-items: center; margin-left: 18px; gap: 3px; white-space: nowrap; padding-bottom: 2px; }
.tool.first { margin-left: 9px; }
.tool.open { margin-left: 13px; gap: 3px; }
.tool.open + .tool { margin-left: 13px; }
.tool small, .tools-right small { font-size: 6px; font-family: "DejaVu Sans", sans-serif; margin-left: 3px; }
.tools-right { margin-left: auto; display: flex; align-items: center; gap: 8px; padding-right: 8px; }
.ex-body { flex: 1; min-height: 0; display: flex; background: #fff; }
.nav {
  flex: none;
  width: 110px;
  display: flex;
  background: #fff;
  border-right: 2px solid #77756c;
}
.tree { width: 98px; padding-top: 0; }
.tree li { height: 12.75px; display: flex; align-items: center; gap: 4px; white-space: nowrap; overflow: hidden; }
.n1 { padding-left: 16px; gap: 3px; }
.n2 { padding-left: 22px; }
.tree .gap { margin-top: 12.5px; }
.tree .gap2 { margin-top: 12px; }
.tree li.sel { background: #d0ceca; }
.vbar { flex: 1; display: flex; flex-direction: column; background: #f0eeea; font-size: 7px; text-align: center; }
.up, .down {
  height: 11px;
  background: #d4d0c8;
  border: 1px solid #fff;
  border-right-color: #666;
  border-bottom-color: #666;
  line-height: 9px;
  font-family: "DejaVu Sans", sans-serif;
}
.up { margin-top: 2px; }
.thumb { margin-top: 40px; flex: 1; background: #cbc8c0; margin-bottom: 3px; }
.list { flex: 1; min-width: 0; }
.head {
  display: grid;
  grid-template-columns: 194px 84px 84px 56px 1fr;
  height: 15px;
  background: #d4d0c8;
  border-bottom: 1px solid #88857c;
}
.head span {
  padding-left: 3px;
  line-height: 13px;
  border-right: 2px solid #8c8a80;
}
.head .c1 { padding-left: 13px; }
.head small { font-size: 6px; }
.rows { padding: 5px 0 0 12px; }
.row {
  display: grid;
  grid-template-columns: 182px 84px 84px 53px;
  width: 403px;
  height: 15.4px;
  align-items: center;
  color: #333;
}
.row > span { padding-left: 3px; white-space: nowrap; }
.row > .zh { padding-bottom: 3px; }
.row .name { display: flex; align-items: center; gap: 3px; }
.row .size { text-align: right; padding: 0 2px 0 0; }
.row.sel { background: #0a246a; color: #e8ecf4; }
.details {
  flex: none;
  height: 37px;
  display: flex;
  align-items: center;
  gap: 19px;
  padding: 0 0 0 13px;
  border-top: 2px solid #c8c5bc;
  background: #fdfdfd;
  margin: 0 -1px 0;
}
.dfolder { width: 22px; height: 32px; flex: none; margin-bottom: 5px; }
.dtext { display: flex; flex-direction: column; gap: 4px; color: #333; padding-bottom: 7px; }
.dname { font-size: 8px; }
.ddate { font-size: 7px; }

/* taskbar */
.task {
  position: absolute;
  left: 0;
  bottom: 0;
  width: 391px;
  height: 30px;
  padding: 3px 0 1px 0;
  display: flex;
  gap: 3px;
  background: #d4d0c8;
  border-top: 1px solid #f4f4f0;
}
.task button {
  font: 7px "DejaVu Sans Mono", monospace;
  color: #222;
  display: flex;
  align-items: center;
  gap: 3px;
  padding: 0 2px;
  background: #d4d0c8;
  border: 1px solid #fff;
  border-right-color: #55544e;
  border-bottom-color: #55544e;
  flex: none;
  overflow: hidden;
  white-space: nowrap;
}
.task .start { width: 34px; margin-right: 3px; gap: 1px; padding: 0 0 0 2px; border-left-color: #d4d0c8; border-top-color: #d4d0c8; }
.flag { display: grid; grid-template-columns: 4px 4px; gap: 1px; flex: none; }
.flag i { height: 4px; display: block; background: #e0502c; }
.flag i:nth-child(2) { background: #58b048; }
.flag i:nth-child(3) { background: #3878d8; }
.flag i:nth-child(4) { background: #e8c030; }
.tk { width: 22px; height: 22px; flex: none; }
.w90 { width: 89px; }
.w30 { width: 31px; justify-content: center; }
.w84 { width: 82px; }
.task .grow { flex: 1; }
.tgrip { width: 5px; flex: none; margin: 0 -1px; border-left: 2px solid #55544e; border-right: 2px solid #55544e; }

.cursor { position: absolute; left: 245px; top: 581px; width: 9px; height: 15px; }
```
